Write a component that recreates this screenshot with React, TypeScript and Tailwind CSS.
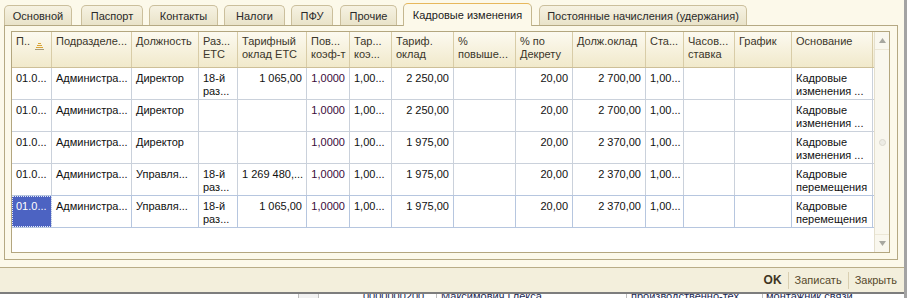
import React from "react";

type Col = { w: string; head: React.ReactNode; right?: boolean };

const cols: Col[] = [
  { w: "w-[40px]", head: "П.." },
  { w: "w-[80px]", head: "Подразделе..." },
  { w: "w-[67px]", head: "Должность" },
  { w: "w-[39px]", head: <>Раз...<br />ЕТС</> },
  { w: "w-[69px]", head: <>Тарифный<br />оклад ЕТС</>, right: true },
  { w: "w-[43px]", head: <>Пов...<br />коэф-т</>, right: true },
  { w: "w-[42px]", head: <>Тар...<br />коэ...</> },
  { w: "w-[62px]", head: <>Тариф.<br />оклад</>, right: true },
  { w: "w-[62px]", head: <>%<br />повыше...</>, right: true },
  { w: "w-[57px]", head: <>% по<br />Декрету</>, right: true },
  { w: "w-[73px]", head: "Долж.оклад", right: true },
  { w: "w-[38px]", head: "Ста..." },
  { w: "w-[51px]", head: <>Часов...<br />ставка</> },
  { w: "w-[57px]", head: "График" },
  { w: "w-[81px]", head: "Основание" },
];

const izm = <>Кадровые<br />изменения ...</>;
const per = <>Кадровые<br />перемещения</>;
const raz = <>18-й<br />раз...</>;

const rows: React.ReactNode[][] = [
  ["01.0...", "Администра...", "Директор", raz, "1 065,00", "1,0000", "1,00...", "2 250,00", "", "20,00", "2 700,00", "1,00...", "", "", izm],
  ["01.0...", "Администра...", "Директор", "", "", "1,0000", "1,00...", "2 250,00", "", "20,00", "2 700,00", "1,00...", "", "", izm],
  ["01.0...", "Администра...", "Директор", "", "", "1,0000", "1,00...", "1 975,00", "", "20,00", "2 370,00", "1,00...", "", "", izm],
  ["01.0...", "Администра...", "Управля...", raz, "1 269 480,...", "1,0000", "1,00...", "1 975,00", "", "20,00", "2 370,00", "1,00...", "", "", per],
  ["01.0...", "Администра...", "Управля...", raz, "1 065,00", "1,0000", "1,00...", "1 975,00", "", "20,00", "2 370,00", "1,00...", "", "", per],
];

const tabs = [
  { t: "Основной", c: "ml-[4px] w-[68px]" },
  { t: "Паспорт", c: "ml-[9px] w-[62px]" },
  { t: "Контакты", c: "ml-[6px] w-[69px]" },
  { t: "Налоги", c: "ml-[6px] w-[61px]" },
  { t: "ПФУ", c: "ml-[6px] w-[42px]" },
  { t: "Прочие", c: "ml-[7px] w-[57px]" },
  { t: "Кадровые изменения", c: "ml-[6px] w-[129px]", active: true },
  { t: "Постоянные начисления (удержания)", c: "ml-[7px] w-[208px]" },
];

function SortIcon() {
  return (
    <svg width="9" height="8" viewBox="0 0 9 8" className="ml-[5px] mt-[8px] shrink-0">
      <rect x="3" y="0" width="3" height="1" fill="#d9a437" />
      <rect x="2" y="2" width="5" height="1" fill="#d9a437" />
      <rect x="1" y="4" width="7" height="1" fill="#d9a437" />
      <rect x="0" y="6" width="9" height="1" fill="#a89b78" />
    </svg>
  );
}

function Arrow({ up }: { up?: boolean }) {
  return (
    <svg width="7" height="5" viewBox="0 0 7 5">
      <polygon points={up ? "0,5 7,5 3.5,0" : "0,0 7,0 3.5,5"} fill="#a7a7a0" />
    </svg>
  );
}

export default function App() {
  return (
    <div className="w-[907px] h-[298px] overflow-hidden flex bg-[#fcf9ea] text-[11px] leading-[13px] text-[#111] font-['Liberation_Sans',Arial,sans-serif]">
      <div className="w-[904px] flex flex-col">
        {/* tabs */}
        <div className="h-[25px] flex items-end">
          {tabs.map((tab) =>
            tab.active ? (
              <div
                key={tab.t}
                className={`${tab.c} relative z-10 -mb-px h-[23px] rounded-t-[5px] border border-b-0 border-[#c4b78f] border-t-[#e7b85c] bg-[#fcf9ea] flex items-center justify-center text-[#1c1c1c]`}
              >
                {tab.t}
              </div>
            ) : (
              <div
                key={tab.t}
                className={`${tab.c} h-[20px] rounded-t-[5px] border border-b-0 border-[#cbbf9c] bg-gradient-to-b from-[#f6f2e2] to-[#e9e3c9] flex items-center justify-center pt-[1px] text-[#2a2a2a]`}
              >
                {tab.t}
              </div>
            )
          )}
        </div>

        {/* panel */}
        <div className="ml-[4px] w-[894px] h-[235px] border border-[#b5a983] bg-[#fcf9ea] pt-[5px] pl-[6px]">
          <div className="w-[879px] h-[222px] border border-[#b3a67f] bg-white flex">
            <div className="w-[862px] flex flex-col">
              {/* header */}
              <div className="flex h-[36px] border-b border-[#cdbf98] bg-gradient-to-b from-[#fcfaf0] to-[#f1e9cb] text-[#3b362a]">
                {cols.map((c, i) => (
                  <div key={i} className={`${c.w} shrink-0 border-r border-[#d8cca7] px-[4px] pt-[3px] whitespace-nowrap overflow-hidden flex`}>
                    <span>{c.head}</span>
                    {i === 0 && <SortIcon />}
                  </div>
                ))}
              </div>
              {/* rows */}
              {rows.map((r, ri) => (
                <div
                  key={ri}
                  className={`flex h-[32px] border-b ${ri >= 3 ? "border-[#b6c6df]" : "border-[#cad1db]"}`}
                >
                  {r.map((v, ci) => {
                    const sel = ri === 4 && ci === 0;
                    const right = cols[ci].right && v !== "1 269 480,...";
                    return (
                      <div
                        key={ci}
                        className={`${cols[ci].w} shrink-0 border-r ${ri === 4 ? "border-[#b6c6df]" : "border-[#cad1db]"} whitespace-nowrap overflow-hidden ${right ? "text-right pr-[4px]" : "pl-[4px]"} ${ci === 5 ? "text-[#3a0c3a]" : ""} ${sel ? "bg-[#4c63c2] text-white outline-1 outline-dotted -outline-offset-1 outline-[#e8ecf8]" : ""}`}
                      >
                        <div className="pt-[4px]">{v}</div>
                      </div>
                    );
                  })}
                </div>
              ))}
            </div>
            {/* scrollbar */}
            <div className="w-[15px] border-l border-[#e4dfcd] bg-[#f9f7ee] flex flex-col">
              <div className="h-[17px] flex items-center justify-center">
                <Arrow up />
              </div>
              <div className="flex-1 border-y border-[#ece7d6] flex items-center justify-center">
                <div className="w-[7px] h-[7px] rounded-full bg-[#ecebe4] border border-[#dad8ce]" />
              </div>
              <div className="h-[17px] flex items-center justify-center">
                <Arrow />
              </div>
            </div>
          </div>
        </div>

        <div className="h-[7px]" />

        {/* command bar */}
        <div className="h-[25px] border-t border-[#b9ad87] bg-[#f3efdc] flex items-center justify-end pr-[7px] text-[#574a2c] text-[11px]">
          <span className="font-bold text-[12px] text-[#3e3522]">OK</span>
          <span className="mx-[6px] w-px h-[17px] bg-[#d9cfb1]" />
          <span>Записать</span>
          <span className="mx-[6px] w-px h-[17px] bg-[#d9cfb1]" />
          <span>Закрыть</span>
        </div>

        {/* window below */}
        <div className="h-[2px] bg-[#7d7d7d]" />
        <div className="h-[4px] bg-white overflow-hidden flex text-[#1b2a55]">
          <div className="w-[298px]" />
          <div className="w-[21px] h-[4px] border-x border-[#bdbdbd] bg-[#f2f2f2]" />
          <div className="w-[117px] -mt-[4px] pl-[44px]">0000000200</div>
          <div className="w-[190px] -mt-[4px] border-l border-[#bdbdbd] pl-[4px]">Максимович Глекса</div>
          <div className="w-[136px] -mt-[4px] border-l border-[#bdbdbd] pl-[4px]">производственно-тех...</div>
          <div className="flex-1 -mt-[4px] border-l border-[#bdbdbd] pl-[3px]">монтажник связи</div>
        </div>
      </div>
      <div className="w-[3px] bg-[#a3a3a3]" />
    </div>
  );
}
